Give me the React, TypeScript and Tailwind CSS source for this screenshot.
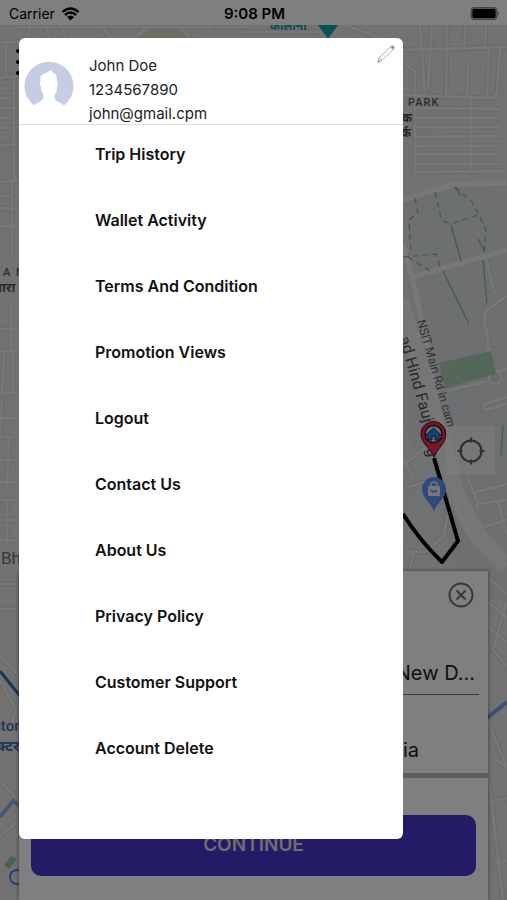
import React from "react";

const menuItems = [
  "Trip History",
  "Wallet Activity",
  "Terms And Condition",
  "Promotion Views",
  "Logout",
  "Contact Us",
  "About Us",
  "Privacy Policy",
  "Customer Support",
  "Account Delete",
];

const streets = [
  // north-east blocks
  "M403 50 L507 47", "M420 25 L425 95", "M432 25 L428 90", "M447 25 L446 97", "M466 25 L464 47", "M486 25 L485 47",
  "M489 48 L487 97", "M500 48 L497 92 Q496 98 490 98 L403 95", "M468 66 L467 96", "M346 25 L385 40", "M403 62 L417 73",
  "M415 70 L415 174", "M471 98 L471 170", "M500 109 L416 108", "M500 118 L416 118", "M500 127 L416 127", "M500 136 L416 137",
  "M500 146 L416 146", "M498 154 L416 154", "M500 164 L416 164", "M502 171 L416 172",
  // top strip
  "M20 27 L250 27", "M30 25 L28 38", "M45 25 L50 38", "M60 25 L66 38", "M100 25 L112 38", "M135 38 L150 25", "M178 25 L190 38", "M210 25 L210 38", "M240 32 L320 32",
  // west blocks
  "M0 42 L19 42", "M6 42 L6 78", "M0 78 L19 76", "M0 88 L12 88", "M0 98 L12 98", "M0 108 L12 108", "M0 118 L12 118", "M0 128 L12 128", "M14 78 L14 180",
  "M0 146 L19 143", "M0 182 L19 180", "M0 196 L12 196", "M0 208 L19 209", "M12 180 L12 256", "M0 226 L19 226",
  "M0 329 L19 329", "M11 305 L11 350", "M0 351 L19 351", "M4 352 L2 395", "M13 352 L13 390", "M0 393 L19 393", "M2 400 L0 437", "M0 418 L19 418", "M0 437 L19 437", "M9 437 L7 490",
  "M0 460 L19 460", "M0 482 L19 482", "M0 500 L19 500", "M0 520 L19 520", "M7 500 L7 545", "M0 540 L19 541", "M0 584 L19 584", "M0 609 L19 609",
  "M0 655 L19 676", "M0 680 L16 710 L10 730", "M0 782 L19 800", "M0 836 L19 820",
  // east side
  "M484 252 L495 294", "M507 296 L488 309 Q482 314 486 330 L493 375", "M485 350 L492 350", "M498 371 L507 369", "M447 391 L487 381", "M507 397 L486 404 Q482 406 485 410 L507 404",
  "M403 465 L430 444", "M403 489 L425 482", "M403 459 L412 475", "M468 478 L478 504 L507 500", "M472 493 L507 484", "M478 504 L476 508", "M484 527 L507 520", "M498 502 L507 535", "M403 552 L425 552 L444 536 L450 500",
  "M414 550 L409 572", "M489 578 L507 594", "M489 603 L507 618", "M489 628 L507 642", "M507 600 L493 650 L507 666", "M489 724 L507 768",
  "M497 760 L507 768", "M489 802 L507 798", "M489 780 L503 900", "M492 864 L507 861",
];

const arterials = [
  "M403 200 L455 184 L507 183",
  "M412 277 L507 250",
  "M403 245 Q424 320 436 395",
  "M452 478 Q455 520 478 545 L507 566",
];

function CityMap() {
  return (
    <svg
      aria-label="Map"
      className="absolute inset-0 h-full w-full"
      viewBox="0 0 507 900"
      preserveAspectRatio="xMidYMid slice"
    >
      <rect width="507" height="900" fill="#e4e5e5" />
      <path d="M403 200 L455 184 L507 183 V600 H470 L403 420 Z" fill="#dbdfe1" />
      <path d="M403 460 L435 448 L446 540 L430 560 L403 540 Z" fill="#e0e3e5" />
      <path d="M140 38 L158 25 H184 L194 38 Z" fill="#dfdbc2" />
      <g fill="none" stroke="#d0d3d5" strokeWidth="5">
        {streets.map((d) => <path key={d} d={d} />)}
      </g>
      <g fill="none" stroke="#efefef" strokeWidth="3" strokeLinejoin="round">
        {streets.map((d) => <path key={d} d={d} />)}
      </g>
      <path d="M400 300 Q428 390 450 470 Q462 525 507 566" fill="none" stroke="#ecedee" strokeWidth="17" />
      <g fill="none" stroke="#f0f1f2" strokeWidth="5" strokeLinejoin="round">
        {arterials.map((d) => <path key={d} d={d} />)}
      </g>
      <circle cx="495" cy="378" r="6" fill="#d2d5d7" stroke="#efefef" strokeWidth="2" />
      <path d="M439 363 L491 351 L496 374 L445 388 Z" fill="#a9ceb1" />
      <g fill="none" stroke="#86b0a4" strokeWidth="1.3">
        <path strokeDasharray="6 4" d="M435 192 L441 218 Q446 224 453 223 L479 215 M455 187 L472 202 L479 215 L486 230 L484 253 M403 257 L436 254 L441 270 M408 257 L430 271 M415 198 L418 212 L409 220 L411 254" />
        <path d="M455 187 L461 196 M451 225 L461 261 M478 239 L485 252 M483 260 L487 303 M443 271 L469 324 M503 425 L501 455" />
      </g>
      <path d="M0 671 L20 696" fill="none" stroke="#2772b0" strokeWidth="3" />
      <path d="M0 817 L13 801 L21 807" fill="none" stroke="#93aae6" strokeWidth="4" />
      <path d="M487 718 L507 702" fill="none" stroke="#789ce2" strokeWidth="4" />
      <path d="M4 865 L11 856 L17 859 L9 869 Z" fill="#8fc7a2" />

      <path d="M403 514 Q420 541 442 562 L458 541 L434 458" fill="none" stroke="#000000" strokeWidth="4" strokeLinejoin="round" />

      <g fontFamily="Roboto, 'Noto Sans', sans-serif">
        <text x="408" y="106" fontSize="11" fontWeight="500" letterSpacing="1" fill="#555b5e">PARK</text>
        <text x="402" y="122" fontSize="12" fontWeight="700" fill="#444a4d">क</text>
        <text x="401" y="137" fontSize="12" fontWeight="700" fill="#444a4d">र्क</text>
        <text x="270" y="30" fontSize="12" fontWeight="700" fill="#159aa6">कॉलोनी</text>
        <text x="3" y="276" fontSize="11" fontWeight="500" fill="#555b5e">A</text>
        <text x="16" y="276" fontSize="11" fontWeight="500" fill="#555b5e">N</text>
        <text x="-6" y="292" fontSize="13" fontWeight="700" fill="#555b5e">गारा</text>
        <text x="1" y="564" fontSize="17" fill="#6c7072">Bh</text>
        <text x="-7" y="731" fontSize="15" fontWeight="500" fill="#4269c0">ctor</text>
        <text x="-4" y="751" fontSize="15" fontWeight="700" fill="#4269c0">क्टर</text>
        <text transform="translate(417 321) rotate(74)" fontSize="12" fill="#5f6366">NSIT Main Rd in cam</text>
        <text transform="translate(399 338) rotate(74)" fontSize="16" fill="#50545a">ad Hind Fauj</text>
        <text transform="translate(426 449) rotate(74)" fontSize="16" fill="#50545a">g</text>
      </g>
      <circle cx="17" cy="877" r="7" fill="none" stroke="#4785ee" strokeWidth="2" />
      <path d="M318 25 H338 L328 39 Z" fill="#0da0ae" />
      <g fill="#000000">
        <circle cx="18" cy="51" r="2" />
        <circle cx="18" cy="62" r="2" />
        <circle cx="18" cy="73" r="2" />
      </g>

      <path d="M434 457 C431 449 421 443 421 434 A12.500 12.500 0 0 1 446 434 C446 443 437 449 434 457 Z" fill="#f02a4c" stroke="#35171f" strokeWidth="1" />
      <circle cx="433.500" cy="434" r="8.500" fill="#d6e0e8" stroke="#35171f" strokeWidth="1.500" />
      <path d="M426 435 L433.500 428 L441 435 L439 436 V440 H435 V436 H432 V440 H428 V436 Z" fill="#2a86f2" stroke="#12305c" strokeWidth="1" />

      <path d="M434 512 C432 503 422 499 422 489 A12 12 0 0 1 446 489 C446 499 436 503 434 512 Z" fill="#5f95f5" />
      <rect x="428" y="486" width="12" height="10" rx="1" fill="#e9edf6" />
      <path d="M431 486 V485 A3 3 0 0 1 437 485 V486" fill="none" stroke="#e9edf6" strokeWidth="1.500" />
      <path d="M431 490 Q434 494 437 490" fill="none" stroke="#5385e8" strokeWidth="1.300" />
    </svg>
  );
}

function StatusBar() {
  return (
    <header className="relative grid h-[25px] grid-cols-3 items-center bg-white pt-[3px] pr-[7px] pl-[9px] text-black">
      <div className="flex items-center gap-[6px] text-[14px] leading-5">
        <span>Carrier</span>
        <svg aria-label="Wi-Fi" className="h-[14px] w-[19px]" viewBox="0 0 19 14">
          <path d="M1.500 5 Q9.500 -2 17.500 5" fill="none" stroke="#000" strokeWidth="2.500" />
          <path d="M4 8 Q9.500 3 15 8" fill="none" stroke="#000" strokeWidth="2.500" />
          <path d="M6 10 Q9.500 7 13 10 L9.500 13.500 Z" fill="#000" />
        </svg>
      </div>
      <time className="text-center text-[15px] leading-5 font-semibold whitespace-nowrap">9:08 PM</time>
      <svg aria-label="Battery" className="h-[14px] w-[30px] justify-self-end" viewBox="0 0 30 14">
        <rect x="1" y="0.500" width="26" height="12" rx="3" fill="#aaaaaa" stroke="#888888" />
        <rect x="2.500" y="2" width="23" height="9" rx="1.500" fill="#000" />
        <path d="M28 4.500 Q30 6.500 28 8.500 Z" fill="#777" />
      </svg>
    </header>
  );
}

function LocateButton() {
  return (
    <button type="button" aria-label="My location" className="mr-3 mb-24 flex size-[49px] items-center justify-center self-end bg-white/50">
      <svg className="size-[28px]" viewBox="0 0 28 28" fill="none" stroke="#5c6063" strokeWidth="2.200">
        <circle cx="14" cy="14" r="10.500" />
        <path d="M14 0.500 V5.500 M14 22.500 V27.500 M0.500 14 H5.500 M22.500 14 H27.500" />
      </svg>
    </button>
  );
}

function TripSheet() {
  return (
    <section aria-label="Trip" className="mx-[19px] bg-white shadow-[0_0_4px_rgba(0,0,0,0.5)]">
      <div className="flex h-[202px] flex-col pr-[9px] pl-[13px]">
        <button type="button" aria-label="Close" className="mt-[11px] mr-[5px] self-end">
          <svg className="size-[26px]" viewBox="0 0 26 26" fill="none" stroke="#6c7376" strokeWidth="2">
            <circle cx="13" cy="13" r="11.500" />
            <path d="M8.500 8.500 L17.500 17.500 M17.500 8.500 L8.500 17.500" />
          </svg>
        </button>
        <p className="mt-[52px] border-b border-[#777777] pr-1 pb-2 text-right text-[20px] leading-[26px] text-[#222222]">New D...</p>
        <p className="mt-[42px] pr-[60px] text-right text-[20px] leading-[26px] text-[#222222]">ia</p>
      </div>
      <div className="h-[5px] bg-[#bababa]" />
      <div className="px-3 pt-[37px] pb-6">
        <button type="button" className="h-[61px] w-full rounded-[10px] bg-[#4636ca] text-center text-[19px] font-semibold text-[#dddddd]">
          CONTINUE
        </button>
      </div>
    </section>
  );
}

function Profile() {
  return (
    <div className="relative flex h-[87px] border-b border-[#dddddd] pt-4 pl-[5px]">
      <svg aria-label="Profile picture" className="mt-[7px] size-[50px] shrink-0" viewBox="0 0 50 50">
        <path d="M10 44.500 A24.500 24.500 0 1 1 40 44.500 C38 42 33 41 31 38 Q30 36 31 33 C33 31 33 28 33 26 Q35 23 33 20 C33 14 31 12 29 12 L27 9 L22 12 C17 13 16 16 16.500 20 Q15 23 17 26 C17 29 18 31 19 33 Q20 36 19 38 C17 41 12 42 10 44.500 Z" fill="#c5cde5" />
      </svg>
      <div className="ml-[15px] text-[15px] leading-6 text-[#222222]">
        <p>John Doe</p>
        <p>1234567890</p>
        <p>john@gmail.cpm</p>
      </div>
      <button type="button" aria-label="Edit profile" className="absolute top-[7px] right-2">
        <svg className="size-[18px]" viewBox="0 0 18 18" fill="none" stroke="#999999" strokeWidth="0.800">
          <path d="M1 17 L2 13 L14 1.500 Q15 0.500 16.500 1.500 Q17.500 3 16.500 4 L5 15.500 Z M2 13 L5 15.500 M13.500 2 L16 4.500" />
          <path d="M1 17 L1.500 15 L3 16.500 Z M14 1.500 L16.500 4 L17 2 L16 1 Z" fill="#777777" />
        </svg>
      </button>
    </div>
  );
}

export default function App() {
  return (
    <div className="relative min-h-screen overflow-hidden font-['Inter','Liberation_Sans',sans-serif]">
      <CityMap />
      <div className="relative flex min-h-screen flex-col">
        <StatusBar />
        <main className="flex flex-1 flex-col justify-end">
          <LocateButton />
          <TripSheet />
        </main>
      </div>
      <div className="absolute inset-0 bg-black/50" />
      <aside className="absolute top-[38px] right-[104px] bottom-[61px] left-[19px] rounded-[6px] bg-white">
        <Profile />
        <nav aria-label="Account menu">
          <ul className="pl-[76px] text-[16px] leading-5 font-semibold text-[#111111]">
            {menuItems.map((item) => (
              <li key={item} className="flex h-[66px] items-start pt-[19px]">
                <a href="#">{item}</a>
              </li>
            ))}
          </ul>
        </nav>
      </aside>
    </div>
  );
}
